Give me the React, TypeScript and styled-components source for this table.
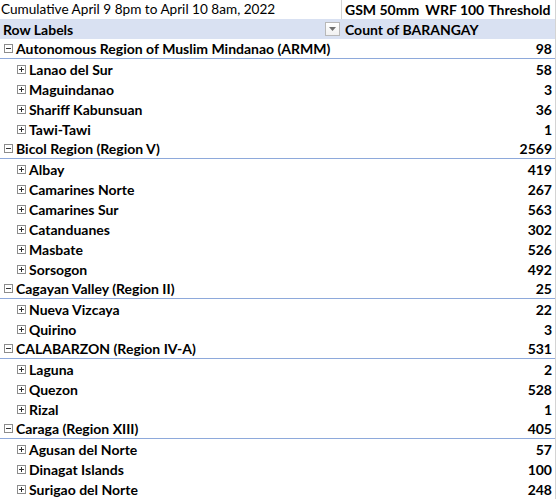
import React from "react";
import styled, { createGlobalStyle } from "styled-components";

const Global = createGlobalStyle`
  html, body { margin: 0; padding: 0; background: #ffffff; }
  body { font-family: "Lato", "Liberation Sans", sans-serif; color: #000; }
`;

type Group = { name: string; total: number; items: [string, number][] };

const data: Group[] = [
  {
    name: "Autonomous Region of Muslim Mindanao (ARMM)",
    total: 98,
    items: [
      ["Lanao del Sur", 58],
      ["Maguindanao", 3],
      ["Shariff Kabunsuan", 36],
      ["Tawi-Tawi", 1],
    ],
  },
  {
    name: "Bicol Region (Region V)",
    total: 2569,
    items: [
      ["Albay", 419],
      ["Camarines Norte", 267],
      ["Camarines Sur", 563],
      ["Catanduanes", 302],
      ["Masbate", 526],
      ["Sorsogon", 492],
    ],
  },
  {
    name: "Cagayan Valley (Region II)",
    total: 25,
    items: [
      ["Nueva Vizcaya", 22],
      ["Quirino", 3],
    ],
  },
  {
    name: "CALABARZON (Region IV-A)",
    total: 531,
    items: [
      ["Laguna", 2],
      ["Quezon", 528],
      ["Rizal", 1],
    ],
  },
  {
    name: "Caraga (Region XIII)",
    total: 405,
    items: [
      ["Agusan del Norte", 57],
      ["Dinagat Islands", 100],
      ["Surigao del Norte", 248],
    ],
  },
];

const Sheet = styled.div`
  width: 555px;
  border-right: 1px solid #d4d4d4;
  font-size: 14px;
  line-height: 19px;
`;

const Row = styled.div<{ $h?: number; $bg?: string; $line?: boolean }>`
  display: grid;
  grid-template-columns: 342px 1fr;
  height: ${(p) => p.$h ?? 20}px;
  box-sizing: border-box;
  background: ${(p) => p.$bg ?? "#ffffff"};
  border-bottom: ${(p) => (p.$line ? "1px solid #8ea9db" : "none")};
`;

const Cell = styled.div<{ $bold?: boolean; $indent?: number; $align?: string; $divider?: boolean }>`
  display: flex;
  align-items: center;
  justify-content: ${(p) => (p.$align === "right" ? "flex-end" : "flex-start")};
  padding-left: ${(p) => p.$indent ?? 0}px;
  padding-right: ${(p) => (p.$align === "right" ? 3 : 0)}px;
  font-weight: ${(p) => (p.$bold ? 700 : 400)};
  white-space: nowrap;
  overflow: hidden;
  border-right: ${(p) => (p.$divider ? "1px solid #d4d4d4" : "none")};
  position: relative;
`;

const TitleText = styled.span`
  font-size: 13.6px;
  font-weight: 400;
`;

const Phrase = styled.span<{ $gap?: number }>`
  margin-right: ${(p) => p.$gap ?? 0}px;
`;

const Toggle = styled.span`
  display: inline-block;
  width: 9px;
  height: 9px;
  box-sizing: border-box;
  border: 1px solid #8c8c8c;
  background: #fff;
  margin-right: 3px;
  flex: none;
  position: relative;
  &::before {
    content: "";
    position: absolute;
    left: 1px;
    top: 3px;
    width: 5px;
    height: 1px;
    background: #333;
  }
`;

const PlusToggle = styled(Toggle)`
  &::after {
    content: "";
    position: absolute;
    left: 3px;
    top: 1px;
    width: 1px;
    height: 5px;
    background: #333;
  }
`;

const FilterButton = styled.span`
  position: absolute;
  right: 2px;
  top: 3px;
  width: 15px;
  height: 14px;
  box-sizing: border-box;
  border: 1px solid #b8b8b8;
  background: linear-gradient(#ffffff, #f1f1f1);
  display: flex;
  align-items: center;
  justify-content: center;
`;

const Label = styled.span``;

export default function App() {
  return (
    <>
      <Global />
      <Sheet>
        <Row $h={19}>
          <Cell $indent={1} $divider>
            <TitleText>Cumulative April 9 8pm to April 10 8am, 2022</TitleText>
          </Cell>
          <Cell $bold $indent={3}>
            <Phrase $gap={6}>GSM 50mm</Phrase>
            <Phrase $gap={4}>WRF 100</Phrase>
            <Phrase>Threshold</Phrase>
          </Cell>
        </Row>
        <Row $bg="#d9e1f2">
          <Cell $bold $indent={3}>
            Row Labels
            <FilterButton>
              <svg width="7" height="4" viewBox="0 0 7 4">
                <path d="M0 0 H7 L3.5 4 Z" fill="#707070" />
              </svg>
            </FilterButton>
          </Cell>
          <Cell $bold $indent={3}>
            Count of BARANGAY
          </Cell>
        </Row>
        {data.map((g) => (
          <React.Fragment key={g.name}>
            <Row $line>
              <Cell $bold $indent={4}>
                <Toggle />
                <Label>{g.name}</Label>
              </Cell>
              <Cell $bold $align="right">
                {g.total}
              </Cell>
            </Row>
            {g.items.map(([n, v]) => (
              <Row key={n}>
                <Cell $bold $indent={17}>
                  <PlusToggle />
                  <Label>{n}</Label>
                </Cell>
                <Cell $bold $align="right">
                  {v}
                </Cell>
              </Row>
            ))}
          </React.Fragment>
        ))}
      </Sheet>
    </>
  );
}
